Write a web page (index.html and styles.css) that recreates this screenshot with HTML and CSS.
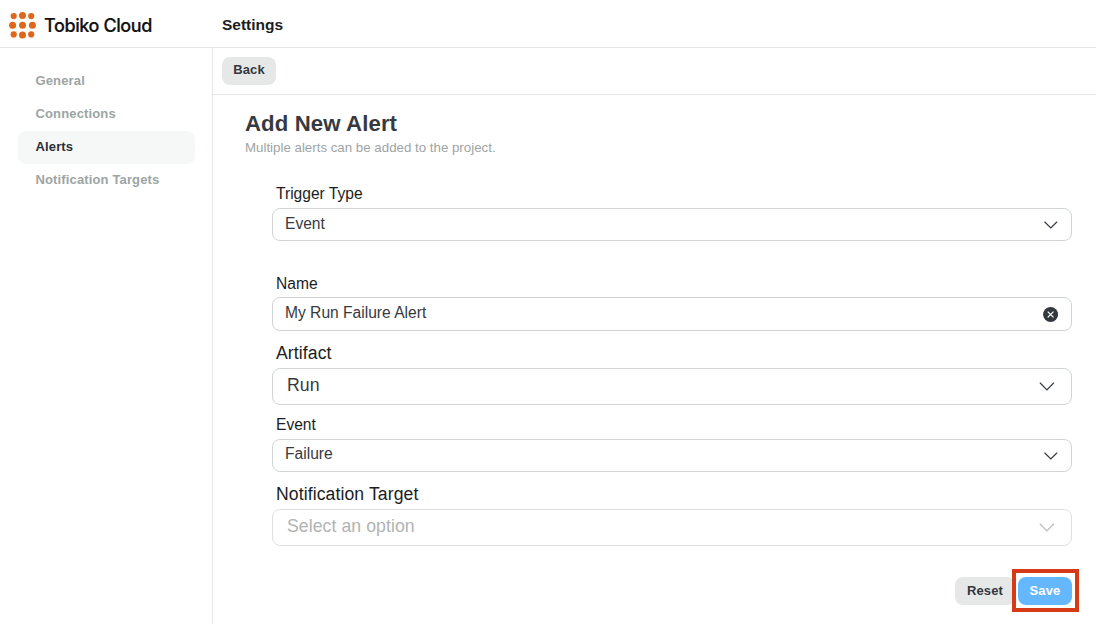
FILE: index.html
```html
<!DOCTYPE html>
<html lang="en">
<head>
<meta charset="utf-8">
<title>Tobiko Cloud</title>
<link rel="stylesheet" href="styles.css">
</head>
<body>
<div class="app">
  <header class="header">
    <div class="brand">
      <svg class="logo" width="28" height="28" viewBox="0 0 28 28" fill="#df671b">
        <circle cx="5.7" cy="5.1" r="3.1"/><circle cx="14.5" cy="4.5" r="3.5"/><circle cx="23.2" cy="5.1" r="3.1"/>
        <circle cx="4.6" cy="14.3" r="3.5"/><circle cx="14.5" cy="14.3" r="3.5"/><circle cx="24.4" cy="14.3" r="3.5"/>
        <circle cx="5.7" cy="23.4" r="3.1"/><circle cx="14.5" cy="24" r="3.5"/><circle cx="23.2" cy="23.4" r="3.1"/>
      </svg>
      <span class="brand-name">Tobiko Cloud</span>
    </div>
    <h1 class="page-title">Settings</h1>
  </header>
  <div class="body">
    <nav class="sidebar">
      <a class="nav-item">General</a>
      <a class="nav-item">Connections</a>
      <a class="nav-item active">Alerts</a>
      <a class="nav-item">Notification Targets</a>
    </nav>
    <main class="main">
      <div class="toolbar"><button class="btn">Back</button></div>
      <section class="content">
        <h2 class="title">Add New Alert</h2>
        <p class="subtitle">Multiple alerts can be added to the project.</p>
        <form class="form">
          <div class="field trigger">
            <label class="label">Trigger Type</label>
            <div class="control"><span>Event</span><svg class="chevron" width="14" height="8" viewBox="0 0 14 8"><path d="M.8 1l6 6 6-6"/></svg></div>
          </div>
          <div class="field name">
            <label class="label">Name</label>
            <div class="control"><span>My Run Failure Alert</span><svg class="clear" width="16" height="16" viewBox="0 0 16 16"><circle cx="7.6" cy="7.5" r="7.5" fill="#33373e"/><path d="M4.7 4.6l5.8 5.8M10.5 4.6l-5.8 5.8" stroke="#fff" stroke-width="1.2"/></svg></div>
          </div>
          <div class="field large">
            <label class="label">Artifact</label>
            <div class="control"><span>Run</span><svg class="chevron" width="16" height="9" viewBox="0 0 16 9"><path d="M1.2 1l6.7 7 6.7-7"/></svg></div>
          </div>
          <div class="field event">
            <label class="label">Event</label>
            <div class="control"><span>Failure</span><svg class="chevron" width="14" height="8" viewBox="0 0 14 8"><path d="M.8 1l6 6 6-6"/></svg></div>
          </div>
          <div class="field large empty">
            <label class="label">Notification Target</label>
            <div class="control"><span>Select an option</span><svg class="chevron" width="16" height="9" viewBox="0 0 16 9"><path d="M1.2 1l6.7 7 6.7-7"/></svg></div>
          </div>
        </form>
        <div class="actions">
          <button class="btn reset">Reset</button>
          <div class="highlight"><button class="btn primary">Save</button></div>
        </div>
      </section>
    </main>
  </div>
</div>
</body>
</html>
```
FILE: styles.css
```css
* { box-sizing: border-box; }
body {
  margin: 0;
  background: #fff;
  color: #363a40;
  font-family: "Liberation Sans", Arial, sans-serif;
}
h1, h2, p { margin: 0; }
.app { display: flex; flex-direction: column; width: 1096px; height: 624px; overflow: hidden; }
.header { display: flex; height: 48px; border-bottom: 1px solid #e5e7e7; }
.brand { display: flex; width: 222px; padding: 11px 0 0 8px; }
.logo { flex: none; margin-right: 8px; }
.brand-name {
  font: 500 18px/29px Inter, sans-serif;
  letter-spacing: -0.4px;
  color: #111;
  -webkit-text-stroke: 0.2px #111;
  white-space: nowrap;
}
.page-title { padding-top: 15px; font-size: 15.5px; line-height: 20px; letter-spacing: 0; color: #1b1d22; }
.body { display: flex; flex: 1; }
.sidebar { width: 213px; padding: 17px 17px 0 18px; border-right: 1px solid #e5e7e7; }
.nav-item {
  display: block;
  height: 33px;
  padding-left: 17.5px;
  border-radius: 8px;
  font-size: 13px;
  font-weight: 700;
  line-height: 32px;
  letter-spacing: 0.14px;
  color: #9da5a4;
}
.nav-item.active { background: #f6f8f7; color: #2b2e36; }
.main { flex: 1; }
.toolbar { height: 47px; padding: 9px 0 0 9px; border-bottom: 1px solid #e5e7e7; }
.btn {
  display: block;
  width: 54px;
  height: 28px;
  padding: 0 0 2px;
  border: 0;
  border-radius: 8px;
  background: #e6e8e7;
  color: #33373e;
  font: 700 13px/26px "Liberation Sans", Arial, sans-serif;
  letter-spacing: 0.14px;
}
.content { padding: 14px 24px 0 32px; }
.title { font-size: 22.2px; line-height: 30px; letter-spacing: 0.1px; }
.subtitle { padding-top: 1px; font-size: 13.3px; line-height: 16px; color: #9da5a4; }
.form { padding: 27px 0 0 27px; }
.label { display: block; height: 22px; padding-left: 4px; font-size: 15.6px; line-height: 22px; color: #1b1d22; }
.control {
  display: flex;
  justify-content: space-between;
  height: 33px;
  padding: 0 13px 0 12px;
  border: 1px solid #d0d5d4;
  border-radius: 8px;
  font-size: 15.6px;
  line-height: 30px;
}
.trigger .label { height: 25px; }
.name { padding-top: 32px; }
.name .label { height: 24px; }
.name .control { height: 34px; padding-right: 12px; }
.clear { margin-top: 9px; }
.chevron { margin-top: 12px; fill: none; stroke: #363a40; stroke-width: 1.15; stroke-linecap: round; }
.large { padding-top: 11px; }
.large .label { height: 26px; font-size: 17.6px; letter-spacing: 0.1px; }
.large .control { height: 37px; padding: 0 16px 0 14px; font-size: 17.7px; line-height: 33px; letter-spacing: 0.05px; }
.large .chevron { margin-top: 13px; }
.event { padding-top: 9px; }
.event .label { height: 25px; }
.event .control { line-height: 28px; }
.large.empty .control { border-color: #dee1e0; color: #b0b4b3; }
.empty .chevron { stroke: #b8bbbb; }
.actions { display: flex; justify-content: flex-end; align-items: flex-start; margin-right: -7px; padding-top: 23px; }
.reset { width: 60px; margin: 8px -3px 0 0; padding: 0; }
.highlight { position: relative; width: 67px; height: 43px; padding: 4px 2px; border: 4px solid #d73a16; background: #fff; }
.primary { width: 54px; padding: 0; background: #65b8ff; color: #fff; }
```
